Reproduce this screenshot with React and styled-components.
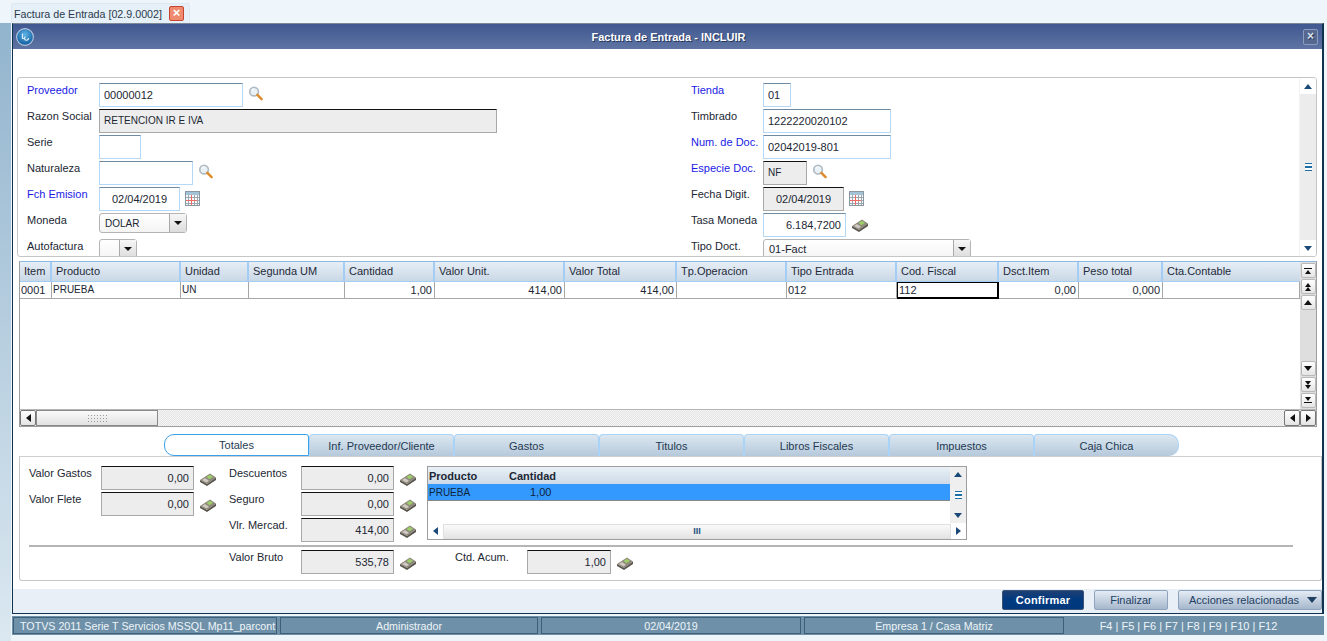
import styled, { createGlobalStyle } from "styled-components";

const GlobalStyle = createGlobalStyle`
  html, body {
    margin: 0;
    padding: 0;
    height: 641px;
    overflow: hidden;
    background: #eef5fb;
    font-family: "Liberation Sans", Arial, sans-serif;
    font-size: 11px;
    color: #1c2733;
  }
`;

const Page = styled.div`
  width: 1327px;
  height: 641px;
  display: flex;
  flex-direction: column;
  background: linear-gradient(#eef5fb, #eef5fb) 11px 0 no-repeat, linear-gradient(#8fb2cc, #dbe8f1);
  overflow: hidden;
`;

const TabStrip = styled.div`
  height: 23px;
  flex: none;
  background: #eef5fb;
  padding: 3px 0 0 11px;
  box-sizing: border-box;
  display: flex;
  align-items: flex-end;
`;

const DocTab = styled.div`
  height: 20px;
  width: 179px;
  box-sizing: border-box;
  background: #e6f0f8;
  border: 1px solid #dfe8f0;
  border-bottom: none;
  border-radius: 3px 3px 0 0;
  display: flex;
  align-items: center;
  padding-left: 2px;
  gap: 7px;
  color: #2a3a4c;
  font-size: 10.7px;
  white-space: nowrap;
`;

const CloseBadge = styled.span`
  width: 13px;
  height: 13px;
  flex: none;
  border: 1px solid #c9442f;
  border-radius: 2px;
  background: #f08a6e;
  color: #fff;
  font-size: 13px;
  font-weight: bold;
  line-height: 12px;
  text-align: center;
`;

const Shell = styled.div`
  flex: none;
  margin-left: 12px;
  width: 1312px;
  height: 591px;
  box-sizing: border-box;
  border: 1px solid #10324f;
  border-top: 1px solid #7b8794;
  border-right: 2px solid #10324f;
  background: #fff;
  display: flex;
  flex-direction: column;
`;

const TitleBar = styled.div`
  height: 25px;
  flex: none;
  background: linear-gradient(#3f5890, #5f74a3);
  display: flex;
  align-items: center;
  padding: 0 3px;
  color: #fff;
  font-weight: bold;
  font-size: 11px;
  text-shadow: 1px 1px 0 #26365c;
`;

const TitleText = styled.div`
  flex: 1;
  text-align: center;
`;

const WinClose = styled.div`
  width: 15px;
  height: 16px;
  box-sizing: border-box;
  border: 1px solid #8c9cc0;
  border-radius: 2px;
  background: #56688f;
  color: #d9e1ee;
  font-size: 12px;
  line-height: 13px;
  text-align: center;
  margin-right: 1px;
`;

const FormPanel = styled.div`
  flex: none;
  height: 180px;
  margin: 28px 5px 0 4px;
  box-sizing: border-box;
  border: 1px solid #c6c6c6;
  border-radius: 3px;
  display: flex;
  overflow: hidden;
`;

const FormBody = styled.div`
  flex: 1;
  display: flex;
  padding: 5px 0 0 9px;
  overflow: hidden;
`;

const FormColumn = styled.div`
  width: ${(p) => p.$width}px;
  flex: none;
  display: flex;
  flex-direction: column;
  gap: 2px;
`;

const Row = styled.div`
  height: 24px;
  flex: none;
  display: flex;
  align-items: flex-start;
`;

const Label = styled.label`
  width: ${(p) => p.$width || 72}px;
  flex: none;
  padding-top: 1px;
  line-height: 12px;
  color: ${(p) => (p.$required ? "#1a1ae6" : "#1c2733")};
`;

const Field = styled.div`
  width: ${(p) => p.$width}px;
  height: 24px;
  flex: none;
  box-sizing: border-box;
  background: ${(p) => (p.$readonly ? "#ededed" : "#fff")};
  border: 1px solid ${(p) => (p.$readonly ? "#a9a9a9" : "#b5d8f7")};
  border-top: 1px solid ${(p) => (p.$readonly ? "#111" : "#6f8ba3")};
  padding: 0 4px;
  display: flex;
  align-items: center;
  justify-content: ${(p) => p.$justify || "flex-start"};
  line-height: 1;
  font-size: ${(p) => (p.$caps ? 10 : 11)}px;
`;

const Combo = styled.div`
  width: ${(p) => p.$width}px;
  height: 20px;
  flex: none;
  box-sizing: border-box;
  border: 1px solid #b4b4b4;
  border-radius: 3px;
  display: flex;
  background: linear-gradient(#fff, #f4f4f4);
`;

const ComboText = styled.div`
  flex: 1;
  padding: 0 5px;
  display: flex;
  align-items: center;
  font-size: ${(p) => (p.$caps ? 10 : 11)}px;
`;

const ComboArrow = styled.div`
  width: 16px;
  border-left: 1px solid #a9a9a9;
  background: linear-gradient(#f6f6f6, #dcdcdc);
  display: flex;
  align-items: center;
  justify-content: center;
  &::after {
    content: "";
    border-left: 4px solid transparent;
    border-right: 4px solid transparent;
    border-top: 4px solid #111;
  }
`;

const IconSlot = styled.span`
  margin-left: ${(p) => p.$gap ?? 4}px;
  margin-top: ${(p) => p.$top ?? 3}px;
  display: inline-flex;
  flex: none;
`;

const VScroll = styled.div`
  width: 16px;
  flex: none;
  background: #e9e9e9;
  display: flex;
  flex-direction: column;
  align-items: center;
  border-left: 1px solid #f3f3f3;
`;

const ScrollEnd = styled.div`
  height: ${(p) => p.$height || 16}px;
  width: 100%;
  flex: none;
  background: #fff;
  display: flex;
  align-items: center;
  justify-content: center;
`;

const ScrollTrack = styled.div`
  flex: 1;
  width: 100%;
  display: flex;
  flex-direction: column;
  align-items: center;
  justify-content: center;
  background: #ececec;
`;

const Arrow = styled.span`
  width: 0;
  height: 0;
  display: block;
  flex: none;
  ${({ $dir, $color = "#1c4a78", $size = 4 }) => {
    const side = `${$size}px solid transparent`;
    const fill = `${$size + 1}px solid ${$color}`;
    if ($dir === "up") return `border-left:${side};border-right:${side};border-bottom:${fill};`;
    if ($dir === "down") return `border-left:${side};border-right:${side};border-top:${fill};`;
    if ($dir === "left") return `border-top:${side};border-bottom:${side};border-right:${fill};`;
    return `border-top:${side};border-bottom:${side};border-left:${fill};`;
  }}
`;

const EndBar = styled.span`
  width: 8px;
  height: 1px;
  background: #111;
  flex: none;
  margin: 1px 0;
`;

const Grip = styled.span`
  width: 7px;
  height: 6px;
  border-top: 1px solid #1d6fa8;
  border-bottom: 1px solid #1d6fa8;
  background: linear-gradient(#fff 40%, #1d6fa8 40%, #1d6fa8 60%, #fff 60%);
`;

const GridWrap = styled.div`
  flex: none;
  height: 166px;
  margin: 4px 5px 0 6px;
  box-sizing: border-box;
  border: 1px solid #9e9e9e;
  border-top: 1px solid #8fb9e0;
  display: flex;
  flex-direction: column;
`;

const GridMain = styled.div`
  flex: 1;
  display: flex;
  min-height: 0;
`;

const GridTable = styled.div`
  flex: 1;
  background: #fff;
`;

const TableRow = styled.div`
  display: grid;
  grid-template-columns: ${(p) => p.$cols};
  height: ${(p) => p.$height}px;
`;

const HeadCell = styled.div`
  background: linear-gradient(#e6eef6, #cad8e6);
  border-right: 2px solid #a3cdf5;
  border-bottom: 1px solid #a3cdf5;
  padding: 0 4px 2px;
  display: flex;
  align-items: center;
  color: #1f2a38;
  &:last-child {
    border-right: none;
  }
`;

const BodyCell = styled.div`
  box-sizing: border-box;
  border-right: 1px solid #a7a7a7;
  border-bottom: 1px solid #a7a7a7;
  padding: 0 2px 1px 1px;
  display: flex;
  align-items: center;
  justify-content: ${(p) => (p.$right ? "flex-end" : "flex-start")};
  font-size: ${(p) => (p.$caps ? 10 : 11)}px;
  ${(p) => p.$focus && "border: 1px solid #000; border-bottom: 2px solid #000; border-right: 2px solid #000;"}
`;

const StackBtn = styled.div`
  height: 15px;
  width: 15px;
  box-sizing: border-box;
  flex: none;
  margin-bottom: 1px;
  background: linear-gradient(#fff, #e4e4e4);
  border: 1px solid #b9b9b9;
  border-radius: 2px;
  display: flex;
  flex-direction: column;
  align-items: center;
  justify-content: center;
`;

const Spacer = styled.div`
  flex: 1;
`;

const GridVScroll = styled.div`
  width: 16px;
  flex: none;
  background: #dedede;
  display: flex;
  flex-direction: column;
  align-items: center;
  padding-top: 1px;
`;

const HScroll = styled.div`
  height: 16px;
  flex: none;
  display: flex;
  background: repeating-conic-gradient(#e4e4e4 0 25%, #f5f5f5 0 50%) 0 0 / 2px 2px;
  border-top: 1px solid #b5b5b5;
`;

const HButton = styled.div`
  width: 16px;
  box-sizing: border-box;
  flex: none;
  background: linear-gradient(#fff, #e4e4e4);
  border: 1px solid #777;
  border-radius: 2px;
  display: flex;
  align-items: center;
  justify-content: center;
`;

const HThumb = styled.div`
  width: 122px;
  box-sizing: border-box;
  flex: none;
  background: linear-gradient(#fafafa, #e2e2e2);
  border: 1px solid #8a8a8a;
  display: flex;
  align-items: center;
  justify-content: center;
`;

const ThumbDots = styled.span`
  width: 20px;
  height: 8px;
  background: radial-gradient(#9a9a9a 40%, transparent 45%) 0 0 / 3px 3px;
`;

const TabsRow = styled.div`
  flex: none;
  margin: 7px 0 0 6px;
  height: 23px;
  display: flex;
  padding-left: 145px;
  border-bottom: 1px solid #cfcfcf;
  box-sizing: border-box;
`;

const Tab = styled.div`
  width: 145px;
  height: 22px;
  flex: none;
  box-sizing: border-box;
  display: flex;
  align-items: center;
  justify-content: center;
  color: #243a52;
  background: ${(p) => (p.$active ? "#fff" : "linear-gradient(#dce7f1, #b5c9db)")};
  border: 1px solid ${(p) => (p.$active ? "#3aa0ea" : "#a9d3f7")};
  border-bottom: ${(p) => (p.$active ? "1px solid #3aa0ea" : "none")};
  border-radius: ${(p) => (p.$first ? "10px 3px 0 10px" : p.$last ? "3px 10px 10px 0" : "4px 4px 0 0")};
`;

const TotalsPanel = styled.div`
  flex: none;
  height: 124px;
  margin: 0 0 0 6px;
  box-sizing: border-box;
  border: 1px solid #c6c6c6;
  border-top: none;
  border-radius: 0 0 3px 3px;
  padding: 9px 9px 0 9px;
  display: flex;
  flex-direction: column;
`;

const TotalsTop = styled.div`
  display: flex;
  height: 79px;
  flex: none;
`;

const TotalsCol = styled.div`
  width: ${(p) => p.$width}px;
  flex: none;
  display: flex;
  flex-direction: column;
  gap: 2px;
`;

const Rule = styled.div`
  height: 2px;
  background: #b5b5b5;
  flex: none;
  margin-right: 19px;
`;

const TotalsBottom = styled.div`
  display: flex;
  gap: 38px;
  padding: 3px 0 0 200px;
`;

const MiniTable = styled.div`
  width: 540px;
  height: 74px;
  flex: none;
  box-sizing: border-box;
  border: 1px solid #9e9e9e;
  display: flex;
  flex-direction: column;
`;

const MiniMain = styled.div`
  flex: 1;
  display: flex;
  min-height: 0;
`;

const MiniCols = styled.div`
  flex: 1;
`;

const MiniHead = styled.div`
  height: 17px;
  display: grid;
  grid-template-columns: 80px 1fr;
  background: linear-gradient(#e9f0f6, #cddae7);
  font-weight: bold;
  font-size: 11px;
  align-items: center;
  padding-left: 1px;
`;

const MiniRow = styled.div`
  height: 16px;
  display: grid;
  grid-template-columns: 80px 1fr;
  background: #3399ff;
  border-bottom: 1px solid #888;
  align-items: center;
  padding-left: 1px;
  color: #10243a;
`;

const MiniName = styled.span`
  font-size: 10px;
`;

const MiniQty = styled.span`
  padding-left: 21px;
`;

const MiniVScroll = styled.div`
  width: 16px;
  flex: none;
  background: #efefef;
  display: flex;
  flex-direction: column;
  align-items: center;
  justify-content: space-between;
  padding: 5px 0;
  box-sizing: border-box;
`;

const MiniHScroll = styled.div`
  height: 16px;
  flex: none;
  display: flex;
  align-items: center;
  justify-content: space-between;
  padding: 0 5px;
  gap: 5px;
`;

const MiniThumb = styled.div`
  flex: 1;
  height: 15px;
  box-sizing: border-box;
  border: 1px solid #e0e0e0;
  background: linear-gradient(#fafafa, #e4e4e4);
  display: flex;
  align-items: center;
  justify-content: center;
  color: #1d4f80;
  font-size: 9px;
  font-weight: bold;
`;

const Footer = styled.div`
  flex: 1;
  margin-top: 8px;
  padding-bottom: 2px;
  background: #e8eff6;
  display: flex;
  align-items: center;
  justify-content: flex-end;
  gap: 10px;
`;

const ActionButton = styled.div`
  width: ${(p) => p.$width}px;
  height: 20px;
  box-sizing: border-box;
  border-radius: 2px;
  display: flex;
  align-items: center;
  justify-content: center;
  gap: 8px;
  padding-left: ${(p) => (p.$menu ? 6 : 0)}px;
  letter-spacing: ${(p) => (p.$primary ? 0.2 : 0)}px;
  font-weight: ${(p) => (p.$primary ? "bold" : "normal")};
  color: ${(p) => (p.$primary ? "#fff" : "#1f3f63")};
  background: ${(p) =>
    p.$primary ? "linear-gradient(#1d3f73 0, #003a80 50%, #00387c)" : "linear-gradient(#e4ecf5, #a6b7cc)"};
  border: 1px solid ${(p) => (p.$primary ? "#3a5478" : "#8fa4bc")};
`;

const StatusBar = styled.div`
  flex: none;
  margin: 2px 0 0 12px;
  width: 1312px;
  height: 19px;
  box-sizing: border-box;
  background: #6e91a9;
  display: flex;
  gap: 3px;
  padding: 1px 0 1px 1px;
  color: #eef4f8;
  font-size: 10.7px;
`;

const StatusCell = styled.div`
  width: ${(p) => p.$width}px;
  flex: none;
  box-sizing: border-box;
  border: 1px solid #3e5f78;
  display: flex;
  align-items: center;
  justify-content: ${(p) => p.$align || "center"};
  padding: 0 6px;
  white-space: nowrap;
  overflow: hidden;
`;

const FKeys = styled.div`
  flex: 1;
  display: flex;
  align-items: center;
  justify-content: center;
  padding-right: 14px;
  font-size: 11px;
  white-space: nowrap;
`;

const Magnifier = () => (
  <svg width="15" height="15" viewBox="0 0 16 16">
    <circle cx="6.5" cy="6" r="4.6" fill="#eaf1f6" stroke="#b0bbc3" strokeWidth="1.8" />
    <path d="M4 5a3 3 0 0 1 3-2" stroke="#fff" strokeWidth="1.2" fill="none" />
    <path d="M10 9.5l4.500 4.500" stroke="#dd8a2a" strokeWidth="2.6" strokeLinecap="round" />
  </svg>
);

const CalendarIcon = () => (
  <svg width="15" height="15" viewBox="0 0 15 15">
    <rect x="0.5" y="0.5" width="14" height="14" fill="#fafbfc" stroke="#8b97a1" />
    <rect x="1" y="1" width="13" height="3" fill="#a4c2d6" />
    <path d="M1 6.500h13M1 9.500h13M1 12.500h13M3.500 4v10M6.500 4v10M9.500 4v10M12.500 4v10" stroke="#9aa5ae" strokeWidth="1" />
    <path d="M1 9.500h11M6.500 4v10" stroke="#ef6a62" strokeWidth="1" />
  </svg>
);

const CalcIcon = () => (
  <svg width="18" height="14" viewBox="0 0 18 14">
    <path d="M1 8l10-6.500L17 5.500 8 12z" fill="#8f897c" />
    <path d="M1 8l7 4 9-6.500V8l-9 6-7-4z" fill="#59554d" />
    <path d="M7.500 5l3.500-2.200 3 2-3.500 2.400z" fill="#9ccf6a" />
    <path d="M3 8l3-2 4 2.700-2.500 1.800z" fill="#cfcbc2" />
  </svg>
);

const LogoBall = () => (
  <svg width="18" height="18" viewBox="0 0 18 18">
    <defs>
      <radialGradient id="logoShine" cx="50%" cy="35%" r="65%">
        <stop offset="0" stopColor="#5fb2e6" />
        <stop offset="1" stopColor="#0d5a9c" />
      </radialGradient>
    </defs>
    <circle cx="9" cy="9" r="8.4" fill="url(#logoShine)" stroke="#b9c6dc" strokeWidth="1.1" />
    <path d="M6.500 5.500v5h2M9.500 8.500a2 2 0 1 0 3 1.500" stroke="#dcecf8" strokeWidth="1.2" fill="none" />
  </svg>
);

const leftFields = [
  { label: "Proveedor", required: true, width: 144, value: "00000012", icon: "search" },
  { label: "Razon Social", width: 398, value: "RETENCION IR E IVA", readonly: true, caps: true },
  { label: "Serie", width: 42 },
  { label: "Naturaleza", width: 94, icon: "search" },
  { label: "Fch Emision", required: true, width: 81, value: "02/04/2019", justify: "center", icon: "calendar" },
  { label: "Moneda", width: 88, combo: true, value: "DOLAR", caps: true },
  { label: "Autofactura", width: 38, combo: true, value: "" },
];

const rightFields = [
  { label: "Tienda", required: true, width: 28, value: "01" },
  { label: "Timbrado", width: 128, value: "1222220020102" },
  { label: "Num. de Doc.", required: true, width: 128, value: "02042019-801" },
  { label: "Especie Doc.", required: true, width: 44, value: "NF", readonly: true, icon: "search", caps: true },
  { label: "Fecha Digit.", width: 81, value: "02/04/2019", readonly: true, justify: "center", icon: "calendar" },
  { label: "Tasa Moneda", width: 83, value: "6.184,7200", justify: "flex-end", icon: "calc" },
  { label: "Tipo Doct.", width: 208, combo: true, value: "01-Fact" },
];

const gridCols = "32px 129px 68px 96px 90px 130px 112px 110px 110px 102px 80px 84px 1fr";

const gridHead = [
  "Item", "Producto", "Unidad", "Segunda UM", "Cantidad", "Valor Unit.", "Valor Total",
  "Tp.Operacion", "Tipo Entrada", "Cod. Fiscal", "Dsct.Item", "Peso total", "Cta.Contable",
];

const gridRow = [
  { text: "0001" }, { text: "PRUEBA", caps: true }, { text: "UN", caps: true }, { text: "" },
  { text: "1,00", right: true }, { text: "414,00", right: true }, { text: "414,00", right: true },
  { text: "" }, { text: "012" }, { text: "112", focus: true },
  { text: "0,00", right: true }, { text: "0,000", right: true }, { text: "" },
];

const tabs = ["Totales", "Inf. Proveedor/Cliente", "Gastos", "Titulos", "Libros Fiscales", "Impuestos", "Caja Chica"];

const FieldIcon = ({ kind }) => {
  if (kind === "search") return <IconSlot $gap={5}><Magnifier /></IconSlot>;
  if (kind === "calendar") return <IconSlot $gap={5} $top={4}><CalendarIcon /></IconSlot>;
  if (kind === "calc") return <IconSlot $gap={5} $top={5}><CalcIcon /></IconSlot>;
  return null;
};

const FormField = ({ field }) => (
  <Row>
    <Label $required={field.required}>{field.label}</Label>
    {field.combo ? (
      <Combo $width={field.width}>
        <ComboText $caps={field.caps}>{field.value}</ComboText>
        <ComboArrow />
      </Combo>
    ) : (
      <Field $width={field.width} $readonly={field.readonly} $justify={field.justify} $caps={field.caps}>
        {field.value}
      </Field>
    )}
    <FieldIcon kind={field.icon} />
  </Row>
);

const TotalField = ({ label, value, width = 93 }) => (
  <Row>
    <Label>{label}</Label>
    <Field $width={width} $readonly $justify="flex-end">{value}</Field>
    <IconSlot $gap={5} $top={6}><CalcIcon /></IconSlot>
  </Row>
);

export default function App() {
  return (
    <Page>
      <GlobalStyle />
      <TabStrip>
        <DocTab>
          Factura de Entrada [02.9.0002]
          <CloseBadge>×</CloseBadge>
        </DocTab>
      </TabStrip>
      <Shell>
        <TitleBar>
          <LogoBall />
          <TitleText>Factura de Entrada - INCLUIR</TitleText>
          <WinClose>×</WinClose>
        </TitleBar>

        <FormPanel>
          <FormBody>
            <FormColumn $width={664}>
              {leftFields.map((f) => <FormField key={f.label} field={f} />)}
            </FormColumn>
            <FormColumn $width={400}>
              {rightFields.map((f) => <FormField key={f.label} field={f} />)}
            </FormColumn>
          </FormBody>
          <VScroll>
            <ScrollEnd><Arrow $dir="up" /></ScrollEnd>
            <ScrollTrack><Grip /></ScrollTrack>
            <ScrollEnd><Arrow $dir="down" /></ScrollEnd>
          </VScroll>
        </FormPanel>

        <GridWrap>
          <GridMain>
            <GridTable>
              <TableRow $cols={gridCols} $height={20}>
                {gridHead.map((h) => <HeadCell key={h}>{h}</HeadCell>)}
              </TableRow>
              <TableRow $cols={gridCols} $height={17}>
                {gridRow.map((c, i) => (
                  <BodyCell key={i} $right={c.right} $focus={c.focus} $caps={c.caps}>{c.text}</BodyCell>
                ))}
              </TableRow>
            </GridTable>
            <GridVScroll>
              <StackBtn><EndBar /><Arrow $dir="up" $color="#111" $size={3} /></StackBtn>
              <StackBtn><Arrow $dir="up" $color="#111" $size={3} /><Arrow $dir="up" $color="#111" $size={3} /></StackBtn>
              <StackBtn><Arrow $dir="up" $color="#111" /></StackBtn>
              <Spacer />
              <StackBtn><Arrow $dir="down" $color="#111" /></StackBtn>
              <StackBtn><Arrow $dir="down" $color="#111" $size={3} /><Arrow $dir="down" $color="#111" $size={3} /></StackBtn>
              <StackBtn><Arrow $dir="down" $color="#111" $size={3} /><EndBar /></StackBtn>
            </GridVScroll>
          </GridMain>
          <HScroll>
            <HButton><Arrow $dir="left" $color="#111" /></HButton>
            <HThumb><ThumbDots /></HThumb>
            <Spacer />
            <HButton><Arrow $dir="left" $color="#111" /></HButton>
            <HButton><Arrow $dir="right" $color="#111" /></HButton>
          </HScroll>
        </GridWrap>

        <TabsRow>
          {tabs.map((t, i) => (
            <Tab key={t} $active={i === 0} $first={i === 0} $last={i === tabs.length - 1}>{t}</Tab>
          ))}
        </TabsRow>

        <TotalsPanel>
          <TotalsTop>
            <TotalsCol $width={200}>
              <TotalField label="Valor Gastos" value="0,00" />
              <TotalField label="Valor Flete" value="0,00" />
            </TotalsCol>
            <TotalsCol $width={198}>
              <TotalField label="Descuentos" value="0,00" />
              <TotalField label="Seguro" value="0,00" />
              <TotalField label="Vlr. Mercad." value="414,00" />
            </TotalsCol>
            <MiniTable>
              <MiniMain>
                <MiniCols>
                  <MiniHead><span>Producto</span><span>Cantidad</span></MiniHead>
                  <MiniRow><MiniName>PRUEBA</MiniName><MiniQty>1,00</MiniQty></MiniRow>
                </MiniCols>
                <MiniVScroll>
                  <Arrow $dir="up" />
                  <Grip />
                  <Arrow $dir="down" />
                </MiniVScroll>
              </MiniMain>
              <MiniHScroll>
                <Arrow $dir="left" />
                <MiniThumb>III</MiniThumb>
                <Arrow $dir="right" />
              </MiniHScroll>
            </MiniTable>
          </TotalsTop>
          <Rule />
          <TotalsBottom>
            <TotalField label="Valor Bruto" value="535,78" />
            <TotalField label="Ctd. Acum." value="1,00" width={84} />
          </TotalsBottom>
        </TotalsPanel>

        <Footer>
          <ActionButton $primary $width={82}>Confirmar</ActionButton>
          <ActionButton $width={74}>Finalizar</ActionButton>
          <ActionButton $menu $width={144}>
            Acciones relacionadas
            <Arrow $dir="down" $color="#1f3f63" $size={5} />
          </ActionButton>
        </Footer>
      </Shell>

      <StatusBar>
        <StatusCell $width={264} $align="flex-start">TOTVS 2011 Serie T Servicios MSSQL Mp11_parcont</StatusCell>
        <StatusCell $width={258}>Administrador</StatusCell>
        <StatusCell $width={260}>02/04/2019</StatusCell>
        <StatusCell $width={260}>Empresa 1 / Casa Matriz</StatusCell>
        <FKeys>F4 | F5 | F6 | F7 | F8 | F9 | F10 | F12</FKeys>
      </StatusBar>
    </Page>
  );
}
